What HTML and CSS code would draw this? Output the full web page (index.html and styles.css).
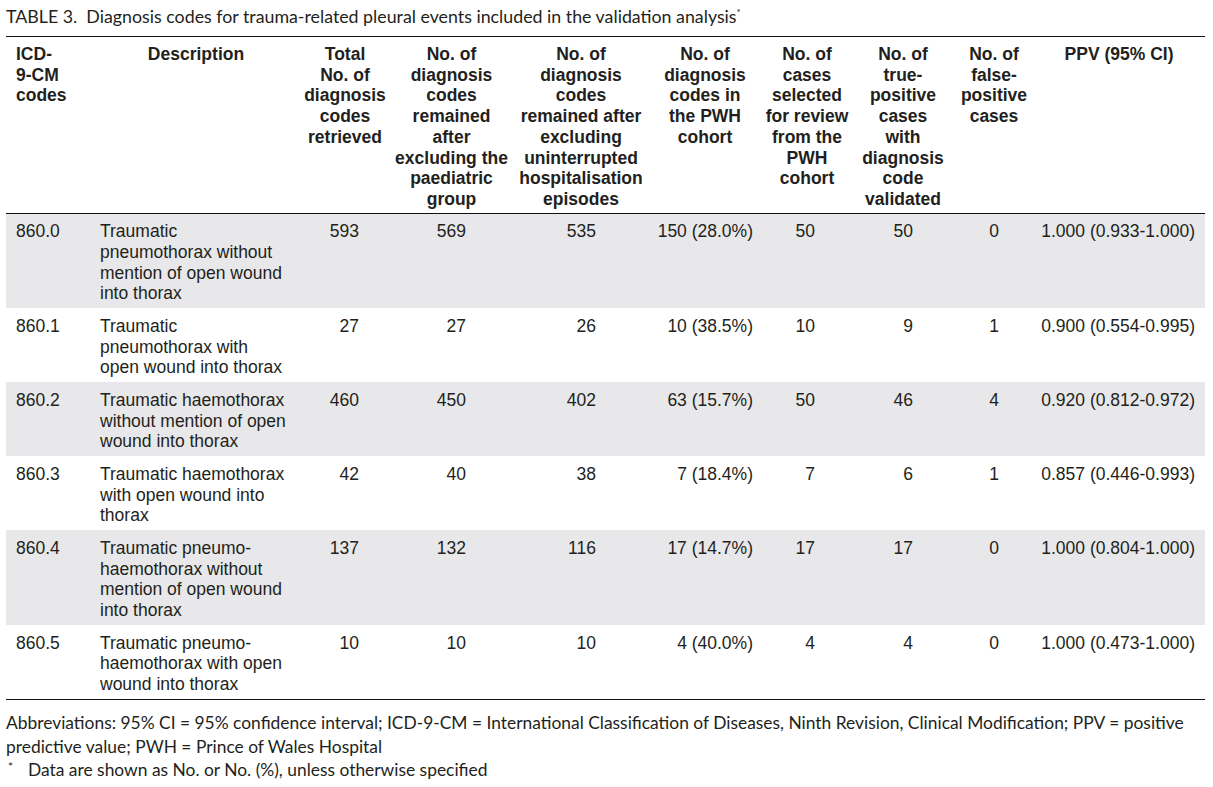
FILE: index.html
```html
<!DOCTYPE html>
<html lang="en">
<head>
<meta charset="utf-8">
<title>Table 3</title>
<link rel="stylesheet" href="styles.css">
</head>
<body>
<div class="page">
  <p class="caption">TABLE 3.&nbsp; Diagnosis codes for trauma-related pleural events included in the validation analysis<sup>*</sup></p>
  <table class="data">
    <colgroup>
      <col class="w1"><col class="w2"><col class="w3"><col class="w4"><col class="w5">
      <col class="w6"><col class="w7"><col class="w8"><col class="w9"><col class="w10">
    </colgroup>
    <thead>
      <tr>
        <th class="left">ICD-<br>9-CM<br>codes</th>
        <th>Description</th>
        <th>Total<br>No. of<br>diagnosis<br>codes<br>retrieved</th>
        <th>No. of<br>diagnosis<br>codes<br>remained<br>after<br>excluding the<br>paediatric<br>group</th>
        <th>No. of<br>diagnosis<br>codes<br>remained after<br>excluding<br>uninterrupted<br>hospitalisation<br>episodes</th>
        <th>No. of<br>diagnosis<br>codes in<br>the PWH<br>cohort</th>
        <th>No. of<br>cases<br>selected<br>for review<br>from the<br>PWH<br>cohort</th>
        <th>No. of<br>true-<br>positive<br>cases<br>with<br>diagnosis<br>code<br>validated</th>
        <th>No. of<br>false-<br>positive<br>cases</th>
        <th>PPV (95% CI)</th>
      </tr>
    </thead>
    <tbody>
      <tr class="shade">
        <td>860.0</td>
        <td>Traumatic<br>pneumothorax without<br>mention of open wound<br>into thorax</td>
        <td class="num n3">593</td><td class="num n4">569</td><td class="num n5">535</td><td class="num n6">150 (28.0%)</td>
        <td class="num n7">50</td><td class="num n8">50</td><td class="num n9">0</td><td class="num n10">1.000 (0.933-1.000)</td>
      </tr>
      <tr>
        <td>860.1</td>
        <td>Traumatic<br>pneumothorax with<br>open wound into thorax</td>
        <td class="num n3">27</td><td class="num n4">27</td><td class="num n5">26</td><td class="num n6">10 (38.5%)</td>
        <td class="num n7">10</td><td class="num n8">9</td><td class="num n9">1</td><td class="num n10">0.900 (0.554-0.995)</td>
      </tr>
      <tr class="shade">
        <td>860.2</td>
        <td>Traumatic haemothorax<br>without mention of open<br>wound into thorax</td>
        <td class="num n3">460</td><td class="num n4">450</td><td class="num n5">402</td><td class="num n6">63 (15.7%)</td>
        <td class="num n7">50</td><td class="num n8">46</td><td class="num n9">4</td><td class="num n10">0.920 (0.812-0.972)</td>
      </tr>
      <tr>
        <td>860.3</td>
        <td>Traumatic haemothorax<br>with open wound into<br>thorax</td>
        <td class="num n3">42</td><td class="num n4">40</td><td class="num n5">38</td><td class="num n6">7 (18.4%)</td>
        <td class="num n7">7</td><td class="num n8">6</td><td class="num n9">1</td><td class="num n10">0.857 (0.446-0.993)</td>
      </tr>
      <tr class="shade">
        <td>860.4</td>
        <td>Traumatic pneumo-<br>haemothorax without<br>mention of open wound<br>into thorax</td>
        <td class="num n3">137</td><td class="num n4">132</td><td class="num n5">116</td><td class="num n6">17 (14.7%)</td>
        <td class="num n7">17</td><td class="num n8">17</td><td class="num n9">0</td><td class="num n10">1.000 (0.804-1.000)</td>
      </tr>
      <tr>
        <td>860.5</td>
        <td>Traumatic pneumo-<br>haemothorax with open<br>wound into thorax</td>
        <td class="num n3">10</td><td class="num n4">10</td><td class="num n5">10</td><td class="num n6">4 (40.0%)</td>
        <td class="num n7">4</td><td class="num n8">4</td><td class="num n9">0</td><td class="num n10">1.000 (0.473-1.000)</td>
      </tr>
    </tbody>
  </table>
  <div class="notes">
    <p>Abbreviations: 95% CI = 95% confidence interval; ICD-9-CM = International Classification of Diseases, Ninth Revision, Clinical Modification; PPV = positive<br>predictive value; PWH = Prince of Wales Hospital</p>
    <p class="fn"><span class="mark">*</span>Data are shown as No. or No. (%), unless otherwise specified</p>
  </div>
</div>
</body>
</html>
```

FILE: styles.css
```css
html, body {
  margin: 0;
  padding: 0;
  background: #ffffff;
}

.page {
  padding: 0 8px 0 6px;
  color: #231f20;
}

.caption {
  margin: 0;
  padding-top: 5px;
  height: 36px;
  box-sizing: border-box;
  font-family: Lato, "Open Sans", sans-serif;
  font-size: 17.8px;
  line-height: 22px;
  white-space: nowrap;
}

.caption sup {
  font-size: 10px;
  line-height: 0;
  vertical-align: 7px;
}

.data {
  width: 1199px;
  border-collapse: collapse;
  table-layout: fixed;
  font-family: "Liberation Sans", Arial, sans-serif;
  font-size: 17.5px;
  line-height: 20.7px;
  border-top: 1.5px solid #111;
  border-bottom: 1.5px solid #111;
}

.w1 { width: 84px; }
.w2 { width: 212px; }
.w3 { width: 86px; }
.w4 { width: 127px; }
.w5 { width: 132px; }
.w6 { width: 116px; }
.w7 { width: 88px; }
.w8 { width: 104px; }
.w9 { width: 78px; }
.w10 { width: 172px; }

.data th {
  font-weight: bold;
  text-align: center;
  vertical-align: top;
  white-space: nowrap;
  padding: 7px 0 3px 0;
  border-bottom: 1.5px solid #111;
}

.data th.left {
  text-align: left;
  padding-left: 10px;
}

.data td {
  vertical-align: top;
  white-space: nowrap;
  padding: 7.5px 0 4.4px 10px;
}

.data tbody tr.shade td {
  background: #e8e8ea;
}

.data td.num {
  text-align: right;
  padding-left: 0;
}

.data td.n3 { padding-right: 29px; }
.data td.n4 { padding-right: 49px; }
.data td.n5 { padding-right: 51px; }
.data td.n6 { padding-right: 10px; }
.data td.n7 { padding-right: 36px; }
.data td.n8 { padding-right: 42px; }
.data td.n9 { padding-right: 34px; }
.data td.n10 { padding-right: 10px; }

.notes {
  padding-top: 11px;
  font-family: Lato, "Open Sans", sans-serif;
  font-size: 17.4px;
  line-height: 23.5px;
}

.notes p {
  margin: 0;
  white-space: nowrap;
}

.notes .fn {
  display: flex;
}

.notes .mark {
  width: 20px;
  padding-left: 2px;
  font-size: 12px;
  line-height: 18px;
}
```
